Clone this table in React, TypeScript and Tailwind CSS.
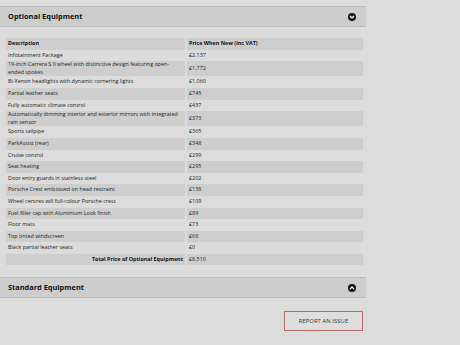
import { ReactNode } from "react";

type Item = { name: string; price: string };

const items: Item[] = [
	{ name: "Infotainment Package", price: "£2,137" },
	{ name: "19-inch Carrera S II wheel with distinctive design featuring open-ended spokes", price: "£1,772" },
	{ name: "Bi-Xenon headlights with dynamic cornering lights", price: "£1,060" },
	{ name: "Partial leather seats", price: "£745" },
	{ name: "Fully automatic climate control", price: "£437" },
	{ name: "Automatically dimming interior and exterior mirrors with integrated rain sensor", price: "£373" },
	{ name: "Sports tailpipe", price: "£365" },
	{ name: "ParkAssist (rear)", price: "£348" },
	{ name: "Cruise control", price: "£299" },
	{ name: "Seat heating", price: "£295" },
	{ name: "Door entry guards in stainless steel", price: "£202" },
	{ name: "Porsche Crest embossed on head restraint", price: "£138" },
	{ name: "Wheel centres will full-colour Porsche crest", price: "£109" },
	{ name: "Fuel filler cap with Aluminium Look finish", price: "£89" },
	{ name: "Floor mats", price: "£73" },
	{ name: "Top tinted windscreen", price: "£68" },
	{ name: "Black partial leather seats", price: "£0" },
];

function ToggleIcon({ open }: { open: boolean }) {
	return (
		<svg width="8" height="8" viewBox="0 0 16 16" className="shrink-0">
			<circle cx="8" cy="8" r="8" fill="#111" />
			<path
				d={open ? "M4.5 6.5 L8 10 L11.5 6.5" : "M4.5 9.5 L8 6 L11.5 9.5"}
				fill="none"
				stroke="#fff"
				strokeWidth="2.6"
				strokeLinecap="round"
				strokeLinejoin="round"
			/>
		</svg>
	);
}

function SectionBar({ title, open }: { title: string; open: boolean }) {
	return (
		<div className="flex items-center justify-between h-[21px] pl-[8px] pr-[10px] bg-[#cdcdcd] border-y border-[#bdbdbd]">
			<h2 className="text-[7.4px] font-bold text-[#111]">{title}</h2>
			<ToggleIcon open={open} />
		</div>
	);
}

function Cell({ children, shaded, className = "" }: { children: ReactNode; shaded: boolean; className?: string }) {
	return (
		<div className={`flex items-center min-h-[11.6px] px-[2px] leading-[7.6px] ${shaded ? "bg-[#cecece]" : ""} ${className}`}>
			{children}
		</div>
	);
}

export default function App() {
	return (
		<div className="w-[460px] h-[345px] bg-[#dcdcdc] font-['Open_Sans',sans-serif] text-[#222] overflow-hidden">
			<div className="w-[366px] pt-[6px]">
				<SectionBar title="Optional Equipment" open={true} />

				{/* equipment table */}
				<div className="grid grid-cols-[179px_176px] gap-x-[2px] mt-[11px] ml-[6px] text-[5.4px]">
					<Cell shaded className="font-bold text-[#111]">Description</Cell>
					<Cell shaded className="font-bold text-[#111]">Price When New (inc VAT)</Cell>
					{items.map((item, i) => (
						<div key={item.name} className="contents">
							<Cell shaded={i % 2 === 1}>{item.name}</Cell>
							<Cell shaded={i % 2 === 1}>{item.price}</Cell>
						</div>
					))}
					<Cell shaded className="justify-end font-bold text-[#111]">Total Price of Optional Equipment</Cell>
					<Cell shaded>£8,510</Cell>
				</div>

				<div className="mt-[12px]">
					<SectionBar title="Standard Equipment" open={false} />
				</div>

				<div className="flex justify-end mt-[13px] pr-[3px]">
					<button className="w-[79px] h-[20px] border border-[#b46a66] bg-[#dedede] text-[5.8px] text-[#333] tracking-[0.1px]">
						REPORT AN ISSUE
					</button>
				</div>
			</div>
		</div>
	);
}
